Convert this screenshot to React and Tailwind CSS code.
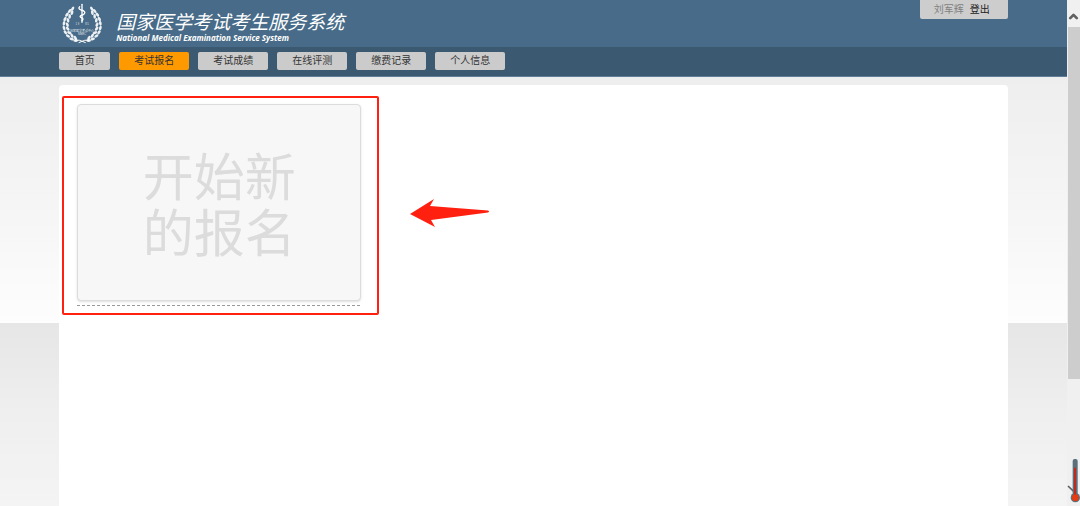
import { ChevronUp } from "lucide-react";

const navItems = [
  { label: "首页", href: "#home" },
  { label: "考试报名", href: "#register", active: true },
  { label: "考试成绩", href: "#score" },
  { label: "在线评测", href: "#assess" },
  { label: "缴费记录", href: "#payment" },
  { label: "个人信息", href: "#profile" },
];

export default function App() {
  return (
    <div className="flex h-screen overflow-hidden bg-[#f0f0f0] font-['Liberation_Sans','Noto_Sans_CJK_SC',sans-serif] text-[10px]">
      <div className="flex min-w-0 flex-1 flex-col bg-[linear-gradient(#e6e6e6,#efefef_28%,#f4f4f4_57%,#fdfdfd)] bg-[length:100%_323px]">
        <Header />
        <NavBar />
        <main className="mx-auto mt-2 flex w-8/9 flex-1 items-start rounded-t bg-white pt-[11px] pl-[3px]">
          <div className="rounded-xs border-2 border-[#ff2010] pt-[6px] pr-4 pb-[7px] pl-[13px]">
            <button
              type="button"
              className="block w-[284px] rounded border border-[#dcdcdc] bg-[#f7f7f7] pt-[46px] pb-[37px] text-center text-[51px] leading-14 text-[#dcdcdc] shadow-sm"
            >
              开始新
              <br />
              的报名
            </button>
            <div className="mt-1 w-[283px] border-b border-dashed border-[#999]" />
          </div>
          <Arrow />
        </main>
      </div>
      <ScrollBar />
    </div>
  );
}

const Header = () => (
  <header className="bg-[#476b88]">
    <div className="mx-auto flex h-[47px] w-8/9 items-start">
      <Logo />
      <div className="mt-3 ml-[7px] text-white italic">
        <h1 className="text-[19px] leading-[22px] font-normal">
          国家医学考试考生服务系统
        </h1>
        <p className="font-['Open_Sans',sans-serif] text-[8px] leading-[8px] font-bold">
          National Medical Examination Service System
        </p>
      </div>
      <div className="ml-auto flex h-[19px] items-center gap-[6px] rounded-b-xs bg-[#cdcdcd] pr-[18px] pl-[14px]">
        <span className="text-[#808080]">刘军辉</span>
        <a href="#logout" className="text-[#222]">
          登出
        </a>
      </div>
    </div>
  </header>
);

const NavBar = () => (
  <nav className="border-b border-[#5f7d98] bg-[#3b5a72]">
    <ul className="mx-auto flex h-[29px] w-8/9 gap-[9px] pt-[5px]">
      {navItems.map(({ label, href, active }) => (
        <li key={href}>
          <a
            href={href}
            className={`block min-w-[51px] rounded-xs px-[15px] text-center leading-[18px] text-[#333] ${
              active ? "bg-[#ff9900]" : "bg-[#cbcbcb]"
            }`}
          >
            {label}
          </a>
        </li>
      ))}
    </ul>
  </nav>
);

// leaves of the left branch: x, y, angle
const leaves = [
  [43, 26, -60],
  [34, 33, -50],
  [41, 38, -75],
  [26, 44, -50],
  [34, 49, -85],
  [20, 57, -60],
  [29, 61, -100],
  [17, 70, -80],
  [27, 74, -115],
  [17, 84, 75],
  [28, 86, 50],
  [21, 97, 55],
  [33, 98, 25],
  [29, 108, 35],
  [41, 107, 60],
  [40, 117, 15],
  [51, 114, 55],
  [52, 122, 5],
];

const Branch = () => (
  <g fill="#fff" fillOpacity="0.9">
    {leaves.map(([x, y, a]) => (
      <ellipse
        key={`${x}-${y}`}
        cx={x}
        cy={y}
        rx="7"
        ry="4"
        transform={`rotate(${a} ${x} ${y})`}
      />
    ))}
    <path
      d="M50 120 Q62 118 82 128"
      fill="none"
      stroke="#fff"
      strokeWidth="3"
    />
  </g>
);

const Logo = () => (
  <svg viewBox="2 0 150 138" className="h-[46px] w-[50px] shrink-0">
    <Branch />
    <g transform="translate(143 0) scale(-1 1)">
      <Branch />
    </g>
    {/* staff and snake */}
    <g fill="none" stroke="#fff" strokeLinecap="round">
      <path d="M71 13V67" strokeWidth="4" />
      <path
        d="M64 20Q58 26 68 30Q84 34 78 41Q74 45 67 47Q62 51 72 54Q76 57 71 62"
        strokeWidth="4"
      />
    </g>
    <g
      fill="#fff"
      fillOpacity="0.85"
      textAnchor="middle"
      className="font-['Liberation_Sans','Noto_Sans_CJK_SC',sans-serif]"
    >
      <text x="57" y="76" fontSize="8">1 9</text>
      <text x="86" y="76" fontSize="8">8 5</text>
      <text x="71" y="95" fontSize="9">国家医学考试中心</text>
      <text x="71" y="106" fontSize="8">NMEC</text>
    </g>
  </svg>
);

const Arrow = () => (
  <svg viewBox="0 0 80 30" className="mt-[102px] ml-[31px] h-[30px] w-20">
    <path
      d="M0 16L24 1L20 8L78 12.500Q80 13.500 78 14.500L21 22L25 29Z"
      fill="#ff2010"
    />
  </svg>
);

const ScrollBar = () => (
  <div className="flex w-[13px] shrink-0 flex-col items-center bg-[#f0f0f0]">
    <div className="flex h-[27px] items-end pb-1">
      <ChevronUp size={13} strokeWidth={5} className="text-[#606060]" />
    </div>
    <div className="h-[352px] w-3 bg-[#cdcdcd]" />
    <svg viewBox="0 0 39 138" className="mt-auto mb-[2px] h-[46px] w-[13px]">
      <path d="M3 84L20 100" stroke="#606060" strokeWidth="5" />
      <rect x="17" y="3" width="15" height="112" rx="6" fill="#5c6f7b" />
      <circle cx="25" cy="119" r="14" fill="#5c6f7b" />
      <path d="M24 29V115" stroke="#c4281b" strokeWidth="6" />
      <circle cx="25" cy="119" r="10" fill="#e63a12" />
    </svg>
  </div>
);
